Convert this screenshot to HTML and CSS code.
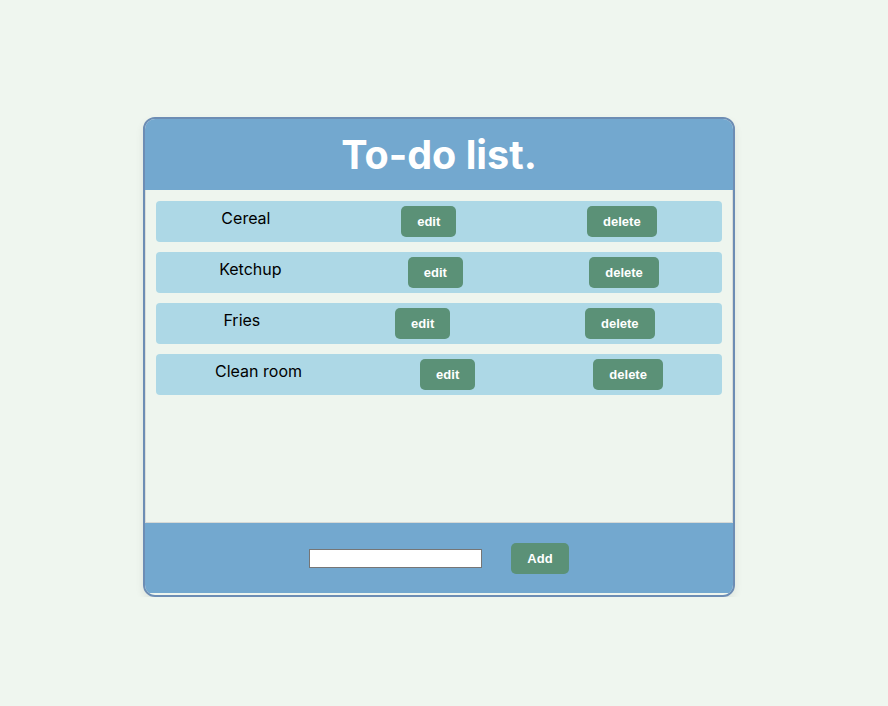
FILE: index.html
```html
<!DOCTYPE html>
<html>
<head>
<meta charset="utf-8">
<title>To-do list</title>
<link rel="stylesheet" href="styles.css">
</head>
<body>
<div class="card">
  <header class="card-head">
    <h1 class="title">To-do list.</h1>
  </header>
  <main class="list">
    <div class="item"><span class="item-text">Cereal</span><button class="btn">edit</button><button class="btn">delete</button></div>
    <div class="item"><span class="item-text">Ketchup</span><button class="btn">edit</button><button class="btn">delete</button></div>
    <div class="item"><span class="item-text">Fries</span><button class="btn">edit</button><button class="btn">delete</button></div>
    <div class="item"><span class="item-text">Clean room</span><button class="btn">edit</button><button class="btn">delete</button></div>
  </main>
  <footer class="card-foot">
    <input class="field" type="text">
    <button class="btn">Add</button>
  </footer>
</div>
</body>
</html>
```
FILE: styles.css
```css
html, body {
  margin: 0;
  padding: 0;
}
body {
  background: #eff6ef;
  font-family: "Inter", "Liberation Sans", sans-serif;
}
.card {
  width: 592px;
  box-sizing: border-box;
  margin: 117px 0 0 143px;
  border: 2px solid #6d8db4;
  border-radius: 12px;
  background: #eef5ee;
  overflow: hidden;
  box-shadow: 0 4px 8px rgba(0, 0, 0, 0.08);
}
.card-head {
  background: #73a8cf;
  height: 71px;
  display: flex;
  align-items: center;
  justify-content: center;
}
.title {
  margin: 0;
  color: #ffffff;
  font-family: "Inter", "Liberation Sans", sans-serif;
  font-weight: 700;
  font-size: 39.5px;
  letter-spacing: 0;
  padding-top: 1px;
}
.list {
  height: 333px;
  box-sizing: border-box;
  padding: 11px 10px;
  border-left: 1px solid #d9ddd9;
  border-right: 1px solid #d9ddd9;
  border-bottom: 1px solid #d6d9d6;
  display: flex;
  flex-direction: column;
  gap: 10px;
}
.item {
  height: 41px;
  background: #add8e6;
  border-radius: 4px;
  display: flex;
  align-items: center;
  justify-content: space-around;
}
.item-text {
  font-size: 16px;
  color: #000;
  padding-bottom: 8px;
}
.btn {
  font-family: "Liberation Sans", Arial, sans-serif;
  font-weight: 700;
  font-size: 13px;
  line-height: 15px;
  color: #ffffff;
  background: #5b9177;
  border: none;
  border-radius: 5px;
  padding: 8px 16px;
}
.card-foot {
  background: #73a8cf;
  height: 72px;
  box-sizing: border-box;
  border-bottom: 2px solid #eef5ee;
  display: flex;
  align-items: center;
  justify-content: center;
  gap: 29px;
  padding-top: 1px;
}
.field {
  width: 173px;
  height: 19px;
  box-sizing: border-box;
  border: 1px solid #767676;
  background: #fff;
  padding: 0 2px;
  margin: 0;
}
```
